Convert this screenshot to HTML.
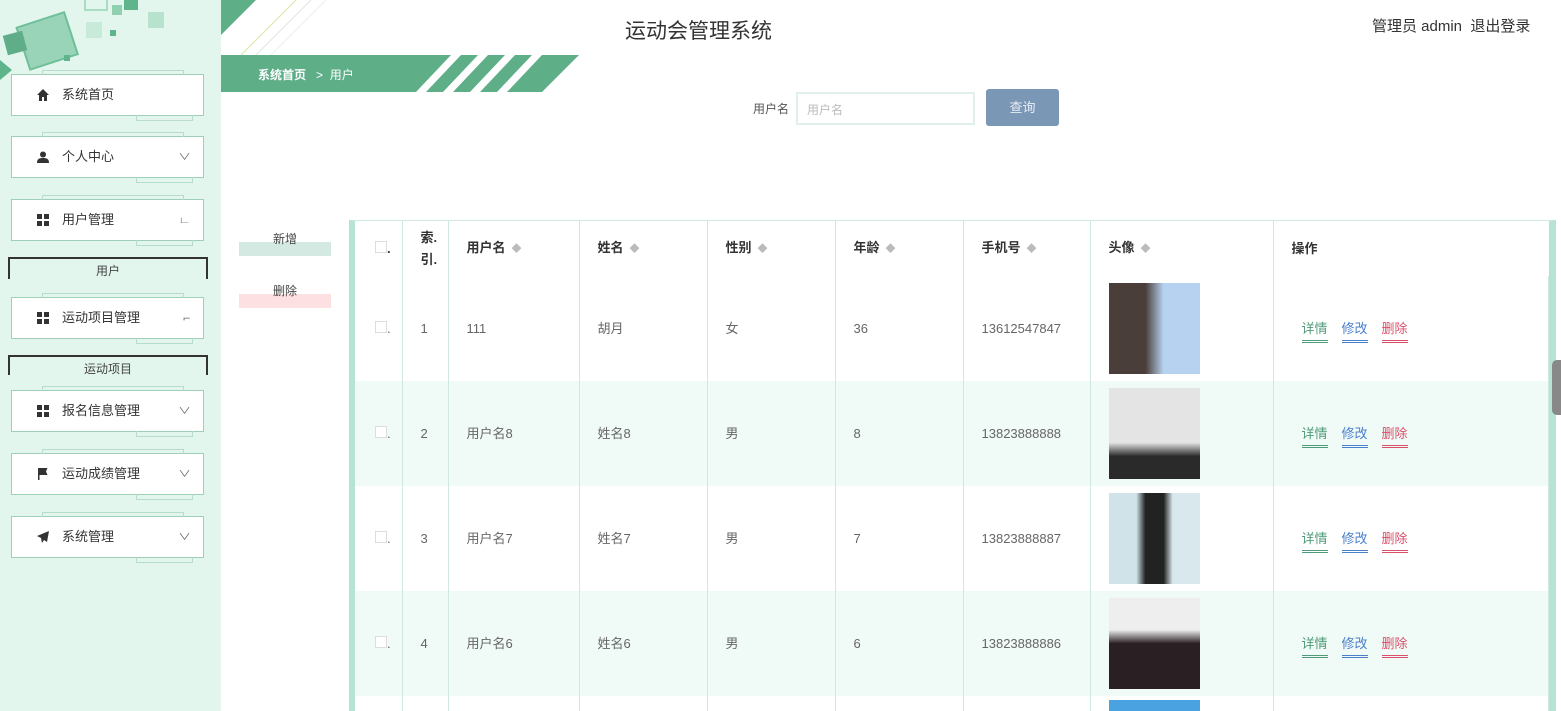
<!DOCTYPE html>
<html><head><meta charset="utf-8"><style>
*{margin:0;padding:0;box-sizing:border-box}
html,body{width:1561px;height:711px;overflow:hidden}
body{background:#fff;font-family:"Liberation Sans","Noto Sans CJK SC",sans-serif;position:relative;color:#333}
.a{position:absolute}
.side{left:0;top:0;width:221px;height:711px;background:#e2f6ee}
.btn{position:absolute;left:11px;width:193px;height:42px;background:#fff;border:1px solid #9fcfb8;font-size:13px;color:#333;line-height:40px;padding-left:50px}
.btn:before{content:"";position:absolute;left:30px;top:-5px;width:140px;height:4px;border:1px solid #b8dccb;border-bottom:none}
.btn:after{content:"";position:absolute;right:10px;bottom:-6px;width:55px;height:5px;border:1px solid #b8dccb;border-top:none}
.ic{position:absolute;left:25px;top:14px;width:12px;height:12px}
.chev{position:absolute;right:14px;top:0;font-size:9px;color:#666;transform:scaleX(1.4)}
.sub{position:absolute;left:8px;width:200px;height:22px;border:2px solid #333;border-bottom:none;font-size:12px;color:#444;text-align:center;line-height:24px}
table{border-collapse:collapse;table-layout:fixed;width:1194px}
th,td{font-size:13px;text-align:left;font-weight:normal;color:#666;border-right:1px solid #cfe9df;line-height:16px}
th{font-weight:bold;color:#333;height:55px;padding-left:18px}
td{height:105px;padding-left:18px;padding-top:0;padding-bottom:0}
tr.s td{background:#f0faf6}
.ph{display:block;width:91px;height:91px}
.op{font-size:13px;margin-right:14px;padding-bottom:4px;border-bottom:3px double}
.g{color:#4f9a78;border-color:#4f9a78}.b{color:#4a7fc9;border-color:#4a7fc9}.r{color:#d9506a;border-color:#d9506a}
.sort{color:#bbb;font-size:10px;margin-left:6px}
.cb{display:inline-block;width:12px;height:12px;border:1px solid #ddd;background:#fff}
</style></head><body>
<div class="a side">
<svg class="a" style="left:0;top:0" width="221" height="80"><rect x="85" y="-8" width="22" height="18" fill="none" stroke="#a8dcc3" stroke-width="2"/><rect x="112" y="5" width="10" height="10" fill="#8fd0b0"/><rect x="124" y="0" width="14" height="10" fill="#5eb48b"/><rect x="148" y="12" width="16" height="16" fill="#b7e2cd"/><g transform="rotate(-18 50 40)"><rect x="22" y="18" width="50" height="44" fill="#9ad4b8" stroke="#6fbf98" stroke-width="2"/></g><rect x="5" y="33" width="20" height="20" fill="#5fae89" transform="rotate(-15 15 43)"/><rect x="86" y="22" width="16" height="16" fill="#c8ebd9"/><rect x="110" y="30" width="6" height="6" fill="#5eb48b"/><rect x="64" y="55" width="6" height="6" fill="#5eb48b"/><polygon points="0,60 12,70 0,80" fill="#5eb48b"/></svg>
<div class="btn" style="top:74px"><svg class="ic" viewBox="0 0 12 12"><path d="M6 0L0 6h2v6h3V8h2v4h3V6h2z" fill="#333"/></svg>系统首页</div>
<div class="btn" style="top:136px"><svg class="ic" viewBox="0 0 12 12"><circle cx="6" cy="3.5" r="3" fill="#333"/><path d="M0 12c0-4 2-5 6-5s6 1 6 5z" fill="#333"/></svg>个人中心<span class="chev">∨</span></div>
<div class="btn" style="top:199px"><svg class="ic" viewBox="0 0 12 12"><rect width="5" height="5" fill="#333"/><rect x="7" width="5" height="5" fill="#333"/><rect y="7" width="5" height="5" fill="#333"/><rect x="7" y="7" width="5" height="5" fill="#333"/></svg>用户管理<span class="chev">∟</span></div>
<div class="sub" style="top:257px">用户</div>
<div class="btn" style="top:297px"><svg class="ic" viewBox="0 0 12 12"><rect width="5" height="5" fill="#333"/><rect x="7" width="5" height="5" fill="#333"/><rect y="7" width="5" height="5" fill="#333"/><rect x="7" y="7" width="5" height="5" fill="#333"/></svg>运动项目管理<span class="chev">⌐</span></div>
<div class="sub" style="top:355px;height:20px">运动项目</div>
<div class="btn" style="top:390px"><svg class="ic" viewBox="0 0 12 12"><rect width="5" height="5" fill="#333"/><rect x="7" width="5" height="5" fill="#333"/><rect y="7" width="5" height="5" fill="#333"/><rect x="7" y="7" width="5" height="5" fill="#333"/></svg>报名信息管理<span class="chev">∨</span></div>
<div class="btn" style="top:453px"><svg class="ic" viewBox="0 0 12 12"><path d="M1 0v12h1.5V7h8L9 3.5 10.5 0z" fill="#333"/></svg>运动成绩管理<span class="chev">∨</span></div>
<div class="btn" style="top:516px"><svg class="ic" viewBox="0 0 12 12"><path d="M12 0L0 5l4 2 1 5 2-3 3 2z" fill="#333"/></svg>系统管理<span class="chev">∨</span></div>
</div>
<svg class="a" style="left:221px;top:0" width="360" height="92"><polygon points="0,0 35,0 0,35" fill="#5eae88"/><line x1="20" y1="55" x2="75" y2="0" stroke="#d8e6a8" stroke-width="1"/><line x1="35" y1="55" x2="90" y2="0" stroke="#e3e3e3"/><line x1="50" y1="55" x2="105" y2="0" stroke="#eee"/><polygon points="0,55 358,55 321,92 0,92" fill="#5eae88"/><g fill="#fff"><polygon points="195,92 205,92 240,55 230,55"/><polygon points="222,92 232,92 267,55 257,55"/><polygon points="249,92 259,92 294,55 284,55"/><polygon points="276,92 286,92 321,55 311,55"/></g></svg>
<div class="a" style="left:258px;top:66px;font-size:12px;color:#fff"><b>系统首页</b>&nbsp;&nbsp; &gt; &nbsp;用户</div>
<div class="a" style="left:625px;top:15px;font-size:21px;color:#333">运动会管理系统</div>
<div class="a" style="left:1372px;top:15px;font-size:15px;color:#333">管理员 admin&nbsp; 退出登录</div>
<div class="a" style="left:753px;top:100px;font-size:12px;color:#555">用户名</div>
<div class="a" style="left:796px;top:92px;width:179px;height:33px;border:2px solid #dff1ea;font-size:12px;color:#bbb;padding:7px 9px">用户名</div>
<div class="a" style="left:986px;top:89px;width:73px;height:37px;background:#7b97b6;border-radius:3px;color:#e8eef5;font-size:13px;text-align:center;line-height:37px">查询</div>
<div class="a" style="left:239px;top:242px;width:92px;height:14px;background:#d3e9e1"></div>
<div class="a" style="left:239px;top:230px;width:92px;font-size:12px;text-align:center;color:#444">新增</div>
<div class="a" style="left:239px;top:294px;width:92px;height:14px;background:#fde0e2"></div>
<div class="a" style="left:239px;top:282px;width:92px;font-size:12px;text-align:center;color:#444">删除</div>
<div class="a" style="left:349px;top:220px;width:1207px;height:491px;overflow:hidden;border-left:6px solid #b6e3d2;border-right:7px solid #b6e3d2;border-top:1px solid #cfe9df">
<table>
<colgroup><col style="width:47px"><col style="width:46px"><col style="width:131px"><col style="width:128px"><col style="width:128px"><col style="width:128px"><col style="width:127px"><col style="width:183px"><col></colgroup>
<tr><th style="padding-left:20px"><span class="cb"></span>.</th><th style="line-height:22px">索.<br>引.</th><th>用户名<span class="sort">◆</span></th><th>姓名<span class="sort">◆</span></th><th>性别<span class="sort">◆</span></th><th>年龄<span class="sort">◆</span></th><th>手机号<span class="sort">◆</span></th><th>头像<span class="sort">◆</span></th><th style="border-right:none">操作</th></tr>
<tr><td style="padding-left:20px"><span class="cb"></span>.</td><td>1</td><td>111</td><td>胡月</td><td>女</td><td>36</td><td>13612547847</td><td><span class="ph" style="background:linear-gradient(90deg,#4a3e3a 0 40%,#b7d2f0 60%)"></span></td><td style="padding-left:28px"><span class="op g">详情</span><span class="op b">修改</span><span class="op r">删除</span></td></tr>
<tr class="s"><td style="padding-left:20px"><span class="cb"></span>.</td><td>2</td><td>用户名8</td><td>姓名8</td><td>男</td><td>8</td><td>13823888888</td><td><span class="ph" style="background:linear-gradient(180deg,#e4e4e4 0 60%,#2a2a2a 75%)"></span></td><td style="padding-left:28px"><span class="op g">详情</span><span class="op b">修改</span><span class="op r">删除</span></td></tr>
<tr><td style="padding-left:20px"><span class="cb"></span>.</td><td>3</td><td>用户名7</td><td>姓名7</td><td>男</td><td>7</td><td>13823888887</td><td><span class="ph" style="background:linear-gradient(90deg,#cfe3e8 0 30%,#222 40% 60%,#d8e8ec 70%)"></span></td><td style="padding-left:28px"><span class="op g">详情</span><span class="op b">修改</span><span class="op r">删除</span></td></tr>
<tr class="s"><td style="padding-left:20px"><span class="cb"></span>.</td><td>4</td><td>用户名6</td><td>姓名6</td><td>男</td><td>6</td><td>13823888886</td><td><span class="ph" style="background:linear-gradient(180deg,#eee 0 35%,#2a1f22 50%)"></span></td><td style="padding-left:28px"><span class="op g">详情</span><span class="op b">修改</span><span class="op r">删除</span></td></tr>
<tr><td style="height:15px"></td><td style="height:15px"></td><td style="height:15px"></td><td style="height:15px"></td><td style="height:15px"></td><td style="height:15px"></td><td style="height:15px"></td><td style="height:15px;vertical-align:top;padding-top:4px"><span class="ph" style="background:#4aa3e0;height:11px"></span></td><td style="height:15px"></td></tr>
</table></div>
<div class="a" style="left:1552px;top:360px;width:9px;height:55px;background:#888;border-radius:5px 0 0 5px"></div>
</body></html>
